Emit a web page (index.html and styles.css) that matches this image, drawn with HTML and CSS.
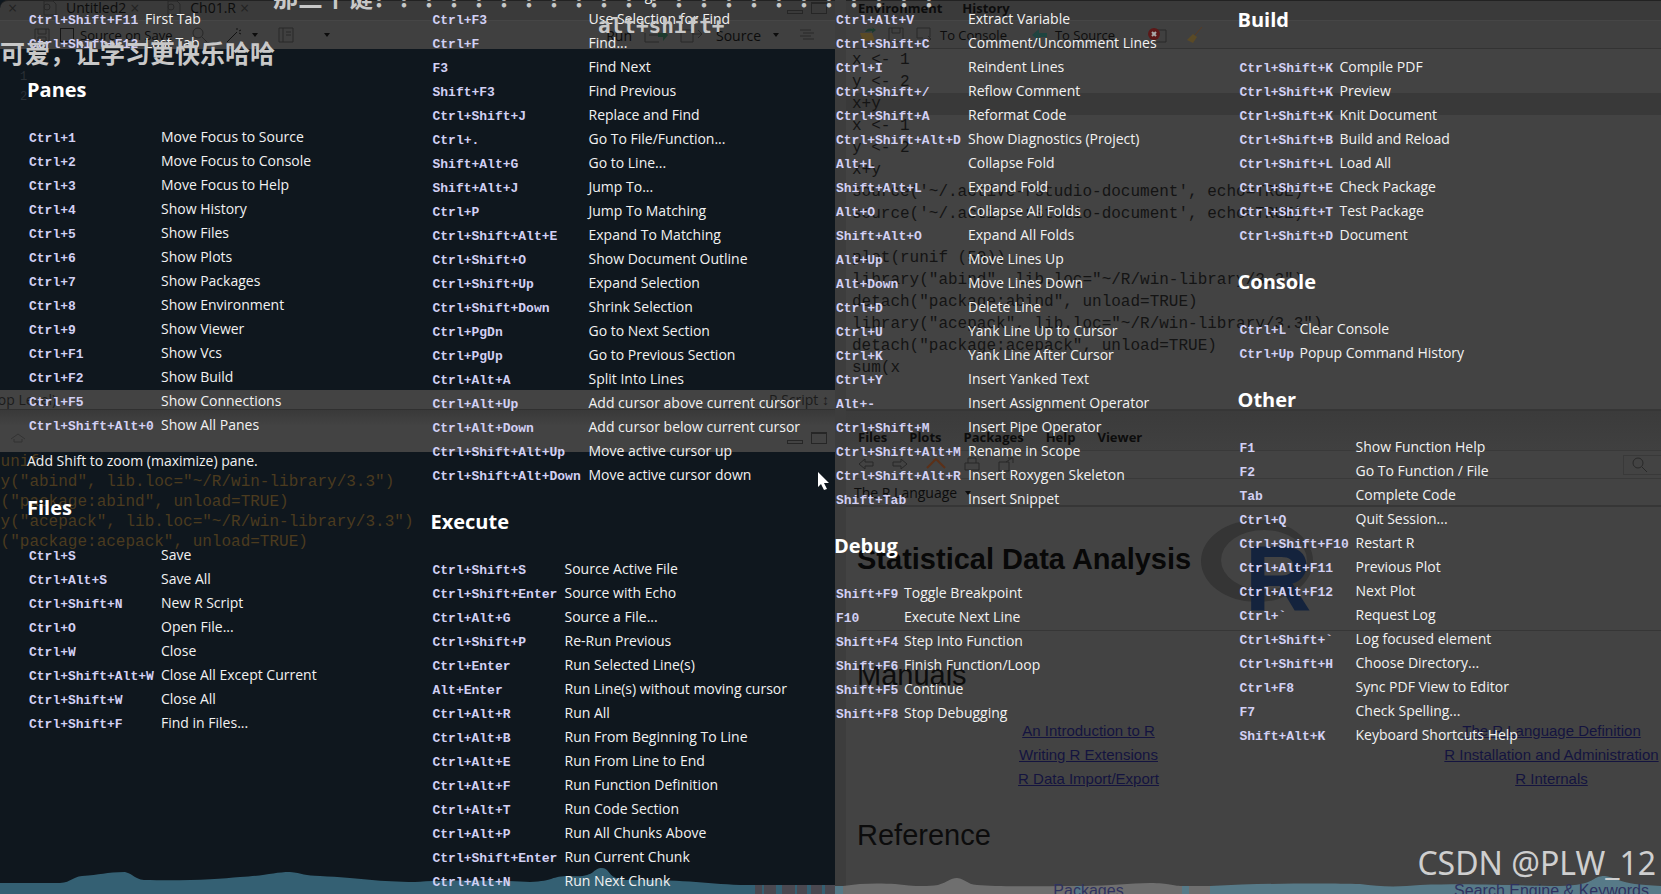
FILE: index.html
```html
<!DOCTYPE html>
<html lang="en">
<head>
  <meta charset="UTF-8">
  <meta name="viewport" content="width=device-width, initial-scale=1">
  <title>Keyboard Shortcuts</title>
  <link rel="stylesheet" href="styles.css">
</head>
<body>

<!-- dimmed IDE behind the overlay -->
<div class="ide">
  <div class="side left">
    <div class="bar tabs">
      <span class="close">×</span>
      <svg class="icon doc" viewBox="0 0 16 16"><path d="M2 1h9l3 3v11H2z"/><circle cx="5" cy="7" r="3"/></svg>
      <span class="tab">Untitled2</span><span class="close">×</span>
      <svg class="icon doc second" viewBox="0 0 16 16"><path d="M2 1h9l3 3v11H2z"/><circle cx="5" cy="7" r="3"/></svg>
      <span class="tab">Ch01.R</span><span class="close">×</span>
      <span class="winbtns"><i class="min"></i><i class="max"></i></span>
    </div>
    <div class="bar tools">
      <svg class="icon" viewBox="0 0 16 16"><path d="M1 2h14v12H1zM4 2v5h8V2M4 14v-4h8v4"/></svg>
      <label class="save"><input type="checkbox">Source on Save</label>
      <svg class="icon find" viewBox="0 0 16 16"><circle cx="6" cy="6" r="5"/><path d="M10 10l5 5"/></svg>
      <svg class="icon wand" viewBox="0 0 16 16"><path d="M1 15L11 5M11 1v2M15 3l-2 1M15 7l-2-1"/></svg>
      <b class="caret"></b>
      <svg class="icon book" viewBox="0 0 16 16"><path d="M1 1h14v14H1zM5 1v14M8 5h5M8 8h5"/></svg>
      <b class="caret far"></b>
      <div class="runs">
        <span>Run</span>
        <svg class="icon rerun" viewBox="0 0 24 16"><path d="M1 6v9h14M5 8h10"/><path class="green" d="M14 6h5V2l5 6-5 6v-4h-5z"/></svg>
        <svg class="icon rerun" viewBox="0 0 24 16"><path d="M1 3h12v12H1zM12 7h10M18 3l4 4-4 4"/></svg>
        <span>Source</span>
        <b class="caret"></b>
        <svg class="icon" viewBox="0 0 16 16"><path d="M1 3h11M4 6h11M1 9h11M4 12h11"/></svg>
      </div>
    </div>
    <div class="editor"><pre>1
2</pre></div>
    <div class="status"><span>(Top Level)</span><span class="lang">R Script ↕</span></div>
    <div class="bar console-bar">
      <svg class="icon" viewBox="0 0 16 16"><path d="M1 9l7-5 7 5M4 9v3h8V9"/></svg>
      <span class="winbtns"><i class="min"></i><i class="max"></i></span>
    </div>
    <pre class="console">plot(runif
library("abind", lib.loc="~/R/win-library/3.3")
detach("package:abind", unload=TRUE)
library("acepack", lib.loc="~/R/win-library/3.3")
detach("package:acepack", unload=TRUE)</pre>
  </div>

  <div class="side right">
    <div class="bar tabs env"><span>Environment</span><span>History</span></div>
    <div class="bar tools envtools">
      <svg class="icon" viewBox="0 0 16 16"><path class="gold" d="M0 6h12l3 8H3z"/><path class="green" d="M5 5c2-4 5-4 8-3l-1-2 4 3-4 3V4z"/></svg>
      <svg class="icon" viewBox="0 0 16 16"><path d="M1 1h14v14H1zM4 1v5h8V1"/></svg>
      <span class="cmd"><svg class="icon" viewBox="0 0 16 16"><path d="M1 1h13v9M1 1v10h6M8 12h7M12 9l3 3-3 3"/></svg>To Console</span>
      <span class="cmd"><svg class="icon" viewBox="0 0 16 16"><path class="teal" d="M16 6H8V2L1 8l7 6v-4h8z"/></svg>To Source</span>
      <svg class="icon del" viewBox="0 0 20 16"><path d="M8 3h11v12H8z"/><circle cx="7" cy="7" r="6"/><path class="cross" d="M5 5l4 4M9 5l-4 4"/></svg>
      <svg class="icon broom" viewBox="0 0 16 16"><path d="M15 0L8 8"/><path class="gold" d="M6 7l4 3-4 6-6-3z"/></svg>
    </div>
    <div class="history">
      <div>x &lt;- 1</div>
      <div>y &lt;- 2</div>
      <div class="selected">x+y</div>
      <div>x &lt;- 1</div>
      <div>y &lt;- 2</div>
      <div>x+y</div>
      <div>source('~/.active-rstudio-document', echo=TRUE)</div>
      <div>source('~/.active-rstudio-document', echo=TRUE)</div>
      <div>&nbsp;</div>
      <div>plot(runif (50))</div>
      <div>library("abind", lib.loc="~/R/win-library/3.3")</div>
      <div>detach("package:abind", unload=TRUE)</div>
      <div>library("acepack", lib.loc="~/R/win-library/3.3")</div>
      <div>detach("package:acepack", unload=TRUE)</div>
      <div>sum(x</div>
    </div>
    <div class="help">
      <div class="helptabs"><span>Files</span><span>Plots</span><span>Packages</span><span>Help</span><span>Viewer</span></div>
      <div class="helptools">
        <svg class="icon" viewBox="0 0 16 16"><path d="M7 2L1 7l6 5V9h8V5H7z"/></svg>
        <svg class="icon" viewBox="0 0 16 16"><path d="M9 2l6 5-6 5V9H1V5h8z"/></svg>
        <svg class="icon home" viewBox="0 0 20 16"><path d="M1 11l9-9 9 9"/></svg>
        <svg class="icon" viewBox="0 0 16 16"><path d="M1 6h14v7H1zM4 6V1h8v5"/></svg>
        <svg class="icon" viewBox="0 0 16 16"><path d="M1 5h10v9H1zM8 5l6-4M10 1h5v5"/></svg>
        <span class="search"><svg class="icon" viewBox="0 0 16 16"><circle cx="6" cy="6" r="5"/><path d="M10 10l5 5"/></svg></span>
      </div>
      <div class="topic">The R Language <b class="caret"></b></div>
      <div class="page">
        <div class="title">
          <h1>Statistical Data Analysis</h1>
          <svg class="rlogo" viewBox="0 0 120 96">
            <path fill-rule="evenodd" d="M4 44a56 41 0 1 0 112 0a56 41 0 1 0-112 0zM24 43a43 30 0 1 0 86 0a43 30 0 1 0-86 0z"/>
            <text x="48" y="93">R</text>
          </svg>
        </div>
        <h2>Manuals</h2>
        <div class="links">
          <a href="#">An Introduction to R</a><a href="#">The R Language Definition</a>
          <a href="#">Writing R Extensions</a><a href="#">R Installation and Administration</a>
          <a href="#">R Data Import/Export</a><a href="#">R Internals</a>
        </div>
        <h2>Reference</h2>
        <div class="links lower">
          <a href="#">Packages</a><a href="#">Search Engine &amp; Keywords</a>
        </div>
      </div>
    </div>
  </div>
</div>

<svg class="wave" viewBox="0 0 1661 36" preserveAspectRatio="none">
  <path class="played" d="M0 25H60C72 24 72 19 82 18C100 17 106 14 125 14C134 16 134 21 144 22C190 23 220 21 240 19C265 18 275 14 290 14C302 15 305 18 320 18C360 20 380 24 415 24C440 22 500 22 530 24C555 23 550 18 570 18C596 20 592 10 602 10C612 11 606 22 630 22C690 21 710 27 755 27H835V36H0z"/>
  <path class="skip" d="M755 27H762V36H755zM764 27H776V36H764zM782 27H795V36H782zM797 27H807V36H797zM811 27H822V36H811zM825 27H835V36H825z"/>
  <path class="rest" d="M843 28C860 25 880 25 895 26C910 28 925 29 938 27C948 24 950 20 957 20C966 21 966 26 977 27C1000 29 1040 28 1075 28V36H843zM1084 28C1110 28 1130 25 1150 25C1170 25 1172 28 1182 28V36H1084zM1189 28H1210V36H1189z"/>
  <path class="blue" d="M835 28H843V36H835zM1075 28H1084V36H1075zM1182 28H1189V36H1182zM1210 28C1270 25 1330 25 1360 26C1380 29 1400 29 1420 27C1480 25 1510 28 1560 28C1598 27 1590 18 1605 18C1620 20 1615 26 1661 28V36H1210z"/>
</svg>

<!-- shortcut list -->
<div class="overlay">
  <div class="column">
    <table class="keys w116">
      <tr><td>Ctrl+Shift+F12</td><td>Previous Tab</td></tr>
      <tr><td>Ctrl+Shift+F11</td><td>First Tab</td></tr>
      <tr><td>Ctrl+Shift+F12</td><td>Last Tab</td></tr>
    </table>
    <h3>Panes</h3>
    <table class="keys w132">
      <tr><td>Ctrl+1</td><td>Move Focus to Source</td></tr>
      <tr><td>Ctrl+2</td><td>Move Focus to Console</td></tr>
      <tr><td>Ctrl+3</td><td>Move Focus to Help</td></tr>
      <tr><td>Ctrl+4</td><td>Show History</td></tr>
      <tr><td>Ctrl+5</td><td>Show Files</td></tr>
      <tr><td>Ctrl+6</td><td>Show Plots</td></tr>
      <tr><td>Ctrl+7</td><td>Show Packages</td></tr>
      <tr><td>Ctrl+8</td><td>Show Environment</td></tr>
      <tr><td>Ctrl+9</td><td>Show Viewer</td></tr>
      <tr><td>Ctrl+F1</td><td>Show Vcs</td></tr>
      <tr><td>Ctrl+F2</td><td>Show Build</td></tr>
      <tr><td>Ctrl+F5</td><td>Show Connections</td></tr>
      <tr><td>Ctrl+Shift+Alt+0</td><td>Show All Panes</td></tr>
    </table>
    <p>Add Shift to zoom (maximize) pane.</p>
    <h3>Files</h3>
    <table class="keys w132">
      <tr><td>Ctrl+S</td><td>Save</td></tr>
      <tr><td>Ctrl+Alt+S</td><td>Save All</td></tr>
      <tr><td>Ctrl+Shift+N</td><td>New R Script</td></tr>
      <tr><td>Ctrl+O</td><td>Open File...</td></tr>
      <tr><td>Ctrl+W</td><td>Close</td></tr>
      <tr><td>Ctrl+Shift+Alt+W</td><td>Close All Except Current</td></tr>
      <tr><td>Ctrl+Shift+W</td><td>Close All</td></tr>
      <tr><td>Ctrl+Shift+F</td><td>Find in Files...</td></tr>
    </table>
  </div>

  <div class="column">
    <table class="keys w156">
      <tr><td>Ctrl+Alt+U</td><td>Find Usages</td></tr>
      <tr><td>Ctrl+F3</td><td>Use Selection for Find</td></tr>
      <tr><td>Ctrl+F</td><td>Find...</td></tr>
      <tr><td>F3</td><td>Find Next</td></tr>
      <tr><td>Shift+F3</td><td>Find Previous</td></tr>
      <tr><td>Ctrl+Shift+J</td><td>Replace and Find</td></tr>
      <tr><td>Ctrl+.</td><td>Go To File/Function...</td></tr>
      <tr><td>Shift+Alt+G</td><td>Go to Line...</td></tr>
      <tr><td>Shift+Alt+J</td><td>Jump To...</td></tr>
      <tr><td>Ctrl+P</td><td>Jump To Matching</td></tr>
      <tr><td>Ctrl+Shift+Alt+E</td><td>Expand To Matching</td></tr>
      <tr><td>Ctrl+Shift+O</td><td>Show Document Outline</td></tr>
      <tr><td>Ctrl+Shift+Up</td><td>Expand Selection</td></tr>
      <tr><td>Ctrl+Shift+Down</td><td>Shrink Selection</td></tr>
      <tr><td>Ctrl+PgDn</td><td>Go to Next Section</td></tr>
      <tr><td>Ctrl+PgUp</td><td>Go to Previous Section</td></tr>
      <tr><td>Ctrl+Alt+A</td><td>Split Into Lines</td></tr>
      <tr><td>Ctrl+Alt+Up</td><td>Add cursor above current cursor</td></tr>
      <tr><td>Ctrl+Alt+Down</td><td>Add cursor below current cursor</td></tr>
      <tr><td>Ctrl+Shift+Alt+Up</td><td>Move active cursor up</td></tr>
      <tr><td>Ctrl+Shift+Alt+Down</td><td>Move active cursor down</td></tr>
    </table>
    <h3>Execute</h3>
    <table class="keys w132">
      <tr><td>Ctrl+Shift+S</td><td>Source Active File</td></tr>
      <tr><td>Ctrl+Shift+Enter</td><td>Source with Echo</td></tr>
      <tr><td>Ctrl+Alt+G</td><td>Source a File...</td></tr>
      <tr><td>Ctrl+Shift+P</td><td>Re-Run Previous</td></tr>
      <tr><td>Ctrl+Enter</td><td>Run Selected Line(s)</td></tr>
      <tr><td>Alt+Enter</td><td>Run Line(s) without moving cursor</td></tr>
      <tr><td>Ctrl+Alt+R</td><td>Run All</td></tr>
      <tr><td>Ctrl+Alt+B</td><td>Run From Beginning To Line</td></tr>
      <tr><td>Ctrl+Alt+E</td><td>Run From Line to End</td></tr>
      <tr><td>Ctrl+Alt+F</td><td>Run Function Definition</td></tr>
      <tr><td>Ctrl+Alt+T</td><td>Run Code Section</td></tr>
      <tr><td>Ctrl+Alt+P</td><td>Run All Chunks Above</td></tr>
      <tr><td>Ctrl+Shift+Enter</td><td>Run Current Chunk</td></tr>
      <tr><td>Ctrl+Alt+N</td><td>Run Next Chunk</td></tr>
    </table>
  </div>

  <div class="column">
    <table class="keys w132">
      <tr><td>Ctrl+Alt+X</td><td>Extract Function</td></tr>
      <tr><td>Ctrl+Alt+V</td><td>Extract Variable</td></tr>
      <tr><td>Ctrl+Shift+C</td><td>Comment/Uncomment Lines</td></tr>
      <tr><td>Ctrl+I</td><td>Reindent Lines</td></tr>
      <tr><td>Ctrl+Shift+/</td><td>Reflow Comment</td></tr>
      <tr><td>Ctrl+Shift+A</td><td>Reformat Code</td></tr>
      <tr><td>Ctrl+Shift+Alt+D</td><td>Show Diagnostics (Project)</td></tr>
      <tr><td>Alt+L</td><td>Collapse Fold</td></tr>
      <tr><td>Shift+Alt+L</td><td>Expand Fold</td></tr>
      <tr><td>Alt+O</td><td>Collapse All Folds</td></tr>
      <tr><td>Shift+Alt+O</td><td>Expand All Folds</td></tr>
      <tr><td>Alt+Up</td><td>Move Lines Up</td></tr>
      <tr><td>Alt+Down</td><td>Move Lines Down</td></tr>
      <tr><td>Ctrl+D</td><td>Delete Line</td></tr>
      <tr><td>Ctrl+U</td><td>Yank Line Up to Cursor</td></tr>
      <tr><td>Ctrl+K</td><td>Yank Line After Cursor</td></tr>
      <tr><td>Ctrl+Y</td><td>Insert Yanked Text</td></tr>
      <tr><td>Alt+-</td><td>Insert Assignment Operator</td></tr>
      <tr><td>Ctrl+Shift+M</td><td>Insert Pipe Operator</td></tr>
      <tr><td>Ctrl+Shift+Alt+M</td><td>Rename in Scope</td></tr>
      <tr><td>Ctrl+Shift+Alt+R</td><td>Insert Roxygen Skeleton</td></tr>
      <tr><td>Shift+Tab</td><td>Insert Snippet</td></tr>
    </table>
    <h3>Debug</h3>
    <table class="keys w68">
      <tr><td>Shift+F9</td><td>Toggle Breakpoint</td></tr>
      <tr><td>F10</td><td>Execute Next Line</td></tr>
      <tr><td>Shift+F4</td><td>Step Into Function</td></tr>
      <tr><td>Shift+F6</td><td>Finish Function/Loop</td></tr>
      <tr><td>Shift+F5</td><td>Continue</td></tr>
      <tr><td>Shift+F8</td><td>Stop Debugging</td></tr>
    </table>
  </div>

  <div class="column">
    <h3>Build</h3>
    <table class="keys w100">
      <tr><td>Ctrl+Shift+K</td><td>Compile PDF</td></tr>
      <tr><td>Ctrl+Shift+K</td><td>Preview</td></tr>
      <tr><td>Ctrl+Shift+K</td><td>Knit Document</td></tr>
      <tr><td>Ctrl+Shift+B</td><td>Build and Reload</td></tr>
      <tr><td>Ctrl+Shift+L</td><td>Load All</td></tr>
      <tr><td>Ctrl+Shift+E</td><td>Check Package</td></tr>
      <tr><td>Ctrl+Shift+T</td><td>Test Package</td></tr>
      <tr><td>Ctrl+Shift+D</td><td>Document</td></tr>
    </table>
    <h3>Console</h3>
    <table class="keys w60">
      <tr><td>Ctrl+L</td><td>Clear Console</td></tr>
      <tr><td>Ctrl+Up</td><td>Popup Command History</td></tr>
    </table>
    <h3>Other</h3>
    <table class="keys w116">
      <tr><td>F1</td><td>Show Function Help</td></tr>
      <tr><td>F2</td><td>Go To Function / File</td></tr>
      <tr><td>Tab</td><td>Complete Code</td></tr>
      <tr><td>Ctrl+Q</td><td>Quit Session...</td></tr>
      <tr><td>Ctrl+Shift+F10</td><td>Restart R</td></tr>
      <tr><td>Ctrl+Alt+F11</td><td>Previous Plot</td></tr>
      <tr><td>Ctrl+Alt+F12</td><td>Next Plot</td></tr>
      <tr><td>Ctrl+`</td><td>Request Log</td></tr>
      <tr><td>Ctrl+Shift+`</td><td>Log focused element</td></tr>
      <tr><td>Ctrl+Shift+H</td><td>Choose Directory...</td></tr>
      <tr><td>Ctrl+F8</td><td>Sync PDF View to Editor</td></tr>
      <tr><td>F7</td><td>Check Spelling...</td></tr>
      <tr><td>Shift+Alt+K</td><td>Keyboard Shortcuts Help</td></tr>
    </table>
  </div>
</div>

<!-- video player layer -->
<div class="comment c1" lang="zh">那三个键？？？？？？？？？？？？？？？？？？？？？？？</div>
<div class="comment c2">alt+shift+</div>
<div class="comment c3" lang="zh">很可爱，让学习更快乐哈哈</div>

<svg class="cursor" viewBox="0 0 12 18"><path d="M1 0v15l3-3 3 6 3-1-3-6h5z"/></svg>
<div class="watermark">CSDN @PLW_12</div>

</body>
</html>
```
FILE: styles.css
```css
* {
  box-sizing: border-box;
}
body {
  margin: 0;
  height: 100vh;
  overflow: hidden;
  position: relative;
  background: #434343;
  font-family: "Open Sans", "Noto Sans", sans-serif;
}
pre, h1, h2, h3, p {
  margin: 0;
}

/* IDE */
.ide {
  display: grid;
  grid-template-columns: 835fr 826fr;
  height: 100vh;
  color: #0c0c0c;
  font-size: 14px;
}
.side {
  display: flex;
  flex-direction: column;
  min-width: 0;
  min-height: 0;
  overflow: hidden;
}
.left {
  background: #0f171e;
}
.right {
  background: #434343;
  border-left: 11px solid #3d3d3d;
}
.bar {
  display: flex;
  align-items: center;
  flex: none;
}
.icon {
  width: 16px;
  height: 16px;
  flex: none;
  fill: none;
  stroke: #282828;
  stroke-width: 1;
}
.icon .green {
  fill: #1c3a2e;
  stroke: none;
}
.icon .gold {
  fill: #5a4a26;
  stroke: none;
}
.icon .teal {
  fill: #1f4440;
  stroke: none;
}
.tabs {
  height: 20px;
  padding-bottom: 6px;
  background: #3a3a3a;
  border-top: 1px solid #222;
}
.left .tabs {
  padding-left: 8px;
  border-top-left-radius: 8px;
}
.close {
  width: 12px;
  color: #222;
  font-size: 16px;
}
.doc {
  margin-left: 22px;
  margin-right: 8px;
}
.second {
  margin-left: 24px;
}
.tab {
  margin-right: 4px;
}
.winbtns {
  display: flex;
  align-items: flex-end;
  gap: 8px;
  margin-left: auto;
  margin-right: 8px;
}
.min {
  width: 16px;
  height: 4px;
  border: 1px solid #262626;
}
.max {
  width: 16px;
  height: 12px;
  border: 1px solid #262626;
  border-top-width: 2px;
}
.tools {
  height: 29px;
  background: #404040;
  border-top: 1px solid #464646;
}
.left .tools {
  padding-left: 34px;
}
.save {
  display: flex;
  align-items: center;
  gap: 6px;
  margin-left: 10px;
  font-size: 13px;
}
.save input {
  appearance: none;
  width: 14px;
  height: 14px;
  margin: 0;
  border: 1px solid #161616;
}
.find {
  margin-left: 20px;
}
.wand {
  margin-left: 18px;
  stroke: #111;
}
.caret {
  display: inline-block;
  margin-left: 10px;
  border: 3px solid transparent;
  border-top: 4px solid #0c0c0c;
  border-bottom: 0;
}
.book {
  margin-left: 20px;
}
.far {
  margin-left: 30px;
}
.runs {
  display: flex;
  align-items: center;
  gap: 12px;
  margin-left: auto;
  margin-right: 20px;
}
.runs .caret {
  margin: 0 8px 0 0;
}
.rerun {
  width: 24px;
}
.editor {
  flex: 341 1 0;
  min-height: 0;
  color: #2a3036;
}
.editor pre {
  padding: 18px 0 0 20px;
  font: 12px/20px "Liberation Mono", monospace;
}
.status {
  display: flex;
  flex: none;
  justify-content: space-between;
  height: 20px;
  line-height: 20px;
  margin-left: -14px;
  padding-right: 6px;
  background: #434343;
  border-bottom: 1px solid #303030;
  color: #1c1c1c;
}
.console-bar {
  height: 42px;
  padding: 14px 0 0 10px;
  background: linear-gradient(#393939, #434343 16px);
}
.console-bar .icon {
  stroke: #333;
}
.console {
  flex: 442 1 0;
  min-height: 0;
  margin-left: -57px;
  color: #4b3b1f;
  font: 16px/20px "Liberation Mono", monospace;
}
.env {
  gap: 20px;
  padding-left: 12px;
  font-weight: bold;
  font-size: 13px;
}
.envtools {
  gap: 12px;
  padding-left: 14px;
  font-size: 13px;
  border-bottom: 1px solid #333;
}
.cmd {
  display: flex;
  align-items: center;
  gap: 8px;
}
.cmd + .cmd {
  margin-left: 12px;
}
.del {
  width: 20px;
  margin-left: 20px;
}
.del circle {
  fill: #5c1818;
  stroke: none;
}
.del .cross {
  stroke: #aaa;
  stroke-width: 2;
}
.broom {
  margin-left: 8px;
  stroke: #5a3a20;
}
.history {
  flex: 361 1 0;
  min-height: 0;
  overflow: hidden;
  font: 16px/22px "Liberation Mono", monospace;
  color: #141414;
  white-space: nowrap;
}
.history div {
  padding-left: 6px;
}
.history .selected {
  background: #393939;
}
.help {
  flex: 484 1 0;
  min-height: 0;
  overflow: hidden;
  border-top: 2px solid #363636;
}
.helptabs {
  display: flex;
  gap: 22px;
  height: 40px;
  padding: 12px 12px 0;
  border-bottom: 1px solid #393939;
  background: linear-gradient(#3b3b3b, #404040);
  font-size: 13px;
  font-weight: bold;
  line-height: 28px;
}
.helptools {
  display: flex;
  align-items: center;
  gap: 18px;
  height: 28px;
  padding-left: 12px;
  border-bottom: 1px solid #393939;
}
.home {
  width: 20px;
  stroke: #5c3018;
  stroke-width: 2;
}
.search {
  display: flex;
  align-items: center;
  width: 38px;
  height: 20px;
  margin-left: auto;
  padding-left: 8px;
  border: 1px solid #393939;
  border-right: 0;
}
.topic {
  height: 28px;
  padding-left: 8px;
  border-bottom: 2px solid #363636;
  line-height: 28px;
}
.topic .caret {
  margin: 0 0 3px 4px;
}
.page {
  padding-left: 11px;
  font-family: "Liberation Sans", Arial, sans-serif;
}
.title {
  display: flex;
  height: 124px;
  border-bottom: 1px solid #363636;
}
.page h1 {
  font-size: 29px;
  line-height: 40px;
  padding-top: 32px;
  color: #080808;
}
.page h2 {
  font-size: 29px;
  font-weight: normal;
  line-height: 40px;
  margin: 24px 0;
}
.rlogo {
  width: 120px;
  height: 96px;
  margin: 10px 0 0 6px;
}
.rlogo path {
  fill: #353535;
}
.rlogo text {
  font: bold 92px "Liberation Sans", Arial, sans-serif;
  fill: #14233d;
}
.links {
  display: grid;
  grid-template-columns: 463px 463px;
  text-align: center;
  font-size: 15px;
  line-height: 24px;
}
.links a {
  color: #14143f;
}
/* the last links stay readable over the wave */
.lower {
  position: relative;
  z-index: 1;
  font-size: 16px;
}
.lower a {
  color: #2f3260;
}

/* shortcuts */
.overlay {
  position: absolute;
  inset: 0;
  display: grid;
  grid-template-columns: repeat(4, 1fr);
  padding: 0 20px 0 27px;
  overflow: hidden;
  color: #f2f2f2;
  font-size: 14px;
}
.column {
  margin-top: -17px;
}
.column h3 {
  margin: 23px 0;
  font-size: 20px;
  line-height: 24px;
  color: #fff;
}
.column h3:first-child {
  margin-top: 25px;
}
.column p {
  margin-top: 12px;
  line-height: 24px;
}
.keys {
  table-layout: fixed;
  width: 100%;
  border-collapse: collapse;
  white-space: nowrap;
}
.keys td {
  height: 24px;
  padding: 0;
  line-height: 24px;
  vertical-align: baseline;
}
.keys td:first-child {
  padding-left: 2px;
  color: #d2d0f4;
  font-family: "Liberation Mono", monospace;
  font-weight: bold;
  font-size: 13px;
  line-height: 18px;
}
.w60 td:first-child { width: 62px; }
.w68 td:first-child { width: 70px; }
.w100 td:first-child { width: 102px; }
.w116 td:first-child { width: 118px; }
.w132 td:first-child { width: 134px; }
.w156 td:first-child { width: 158px; }

/* player */
.comment {
  position: absolute;
  color: #c8c8c8;
  font: bold 25px/26px "Noto Sans CJK SC", sans-serif;
  white-space: nowrap;
}
.c1 {
  top: -17px;
  left: 273px;
}
.c2 {
  top: 13px;
  left: 598px;
  font-family: "DejaVu Sans Mono", monospace;
  font-size: 21px;
}
.c3 {
  top: 39px;
  left: -25px;
}
.cursor {
  position: absolute;
  left: 817px;
  top: 472px;
  width: 12px;
  height: 18px;
  fill: #fff;
}
.wave {
  position: absolute;
  left: 0;
  bottom: 0;
  width: 100%;
  height: 36px;
}
.played { fill: #3b6d82; opacity: .85; }
.skip { fill: #4a4850; }
.rest { fill: #777; opacity: .85; }
.blue { fill: #5a8494; opacity: .85; }
.watermark {
  position: absolute;
  right: 5px;
  bottom: 9px;
  color: #cfcfcf;
  font: 32px/44px "Noto Sans", sans-serif;
}
```
